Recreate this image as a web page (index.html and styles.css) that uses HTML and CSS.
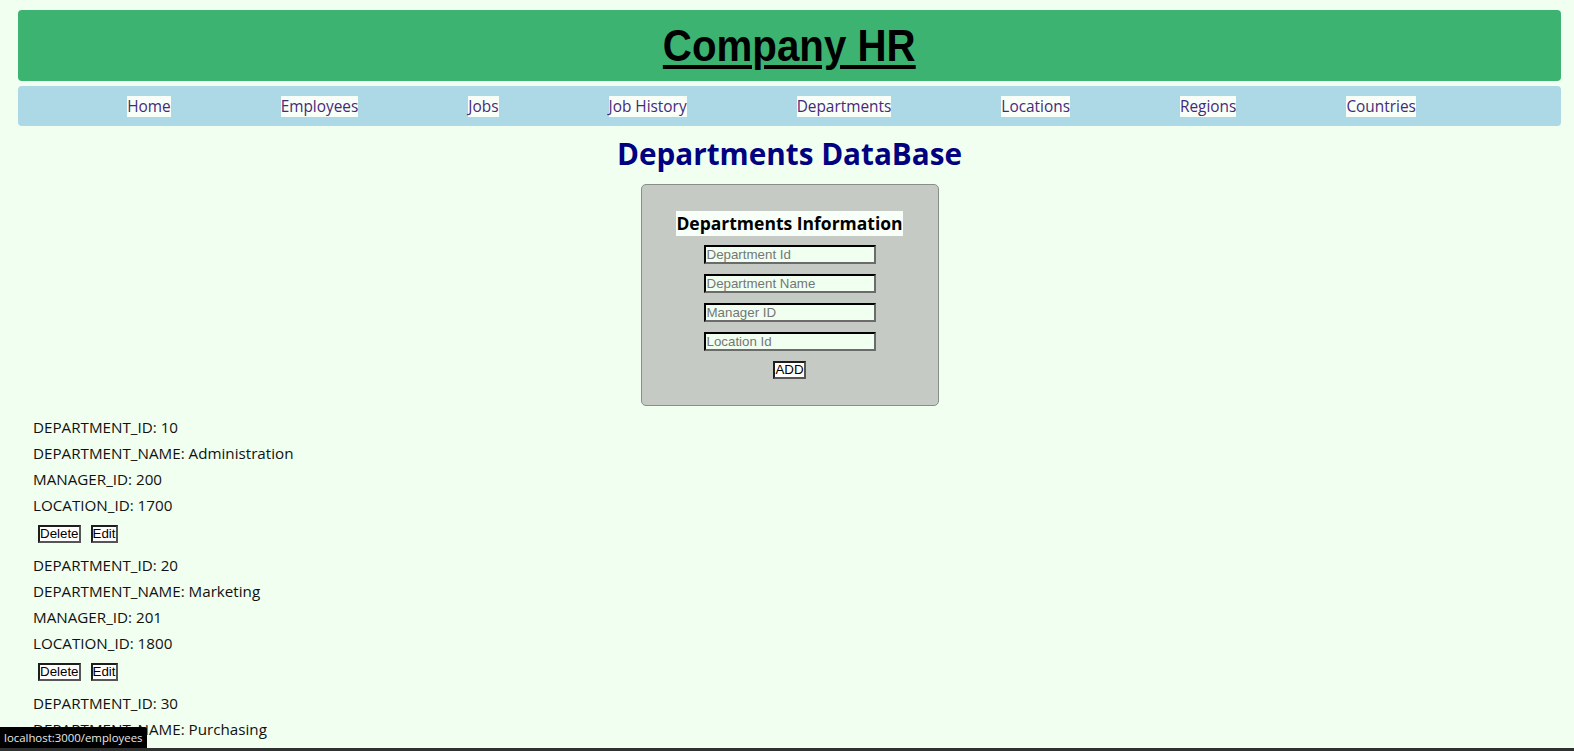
FILE: index.html
```html
<!DOCTYPE html>
<html lang="en">
<head>
<meta charset="utf-8">
<title>Company HR</title>
<link rel="stylesheet" href="styles.css">
</head>
<body>
<header class="banner">
  <h1 class="brand">Company HR</h1>
</header>
<nav class="menu">
  <a class="menu-link" href="#">Home</a>
  <a class="menu-link" href="#">Employees</a>
  <a class="menu-link" href="#">Jobs</a>
  <a class="menu-link" href="#">Job History</a>
  <a class="menu-link" href="#">Departments</a>
  <a class="menu-link" href="#">Locations</a>
  <a class="menu-link" href="#">Regions</a>
  <a class="menu-link" href="#">Countries</a>
</nav>
<h2 class="page-title">Departments DataBase</h2>
<form class="form-card">
  <h3 class="form-title">Departments Information</h3>
  <input class="field" type="text" placeholder="Department Id">
  <input class="field" type="text" placeholder="Department Name">
  <input class="field" type="text" placeholder="Manager ID">
  <input class="field" type="text" placeholder="Location Id">
  <button class="btn" type="button">ADD</button>
</form>
<section class="records">
  <div class="record">
    <div class="line">DEPARTMENT_ID: 10</div>
    <div class="line">DEPARTMENT_NAME: Administration</div>
    <div class="line">MANAGER_ID: 200</div>
    <div class="line">LOCATION_ID: 1700</div>
    <div class="actions"><button class="btn" type="button">Delete</button><button class="btn" type="button">Edit</button></div>
  </div>
  <div class="record">
    <div class="line">DEPARTMENT_ID: 20</div>
    <div class="line">DEPARTMENT_NAME: Marketing</div>
    <div class="line">MANAGER_ID: 201</div>
    <div class="line">LOCATION_ID: 1800</div>
    <div class="actions"><button class="btn" type="button">Delete</button><button class="btn" type="button">Edit</button></div>
  </div>
  <div class="record">
    <div class="line">DEPARTMENT_ID: 30</div>
    <div class="line">DEPARTMENT_NAME: Purchasing</div>
    <div class="line">MANAGER_ID: 114</div>
    <div class="line">LOCATION_ID: 1700</div>
    <div class="actions"><button class="btn" type="button">Delete</button><button class="btn" type="button">Edit</button></div>
  </div>
</section>
<div class="status-tip">localhost:3000/employees</div>
<div class="window-edge"></div>
</body>
</html>
```
FILE: styles.css
```css
html {
  scrollbar-width: none;
}
body {
  margin: 0;
  padding: 10px 13px 0 18px;
  background: #f0fff0;
  font-family: "Open Sans", "Noto Sans", sans-serif;
  color: #111;
}
.banner {
  height: 71px;
  background: #3cb371;
  border-radius: 4px;
  display: flex;
  align-items: center;
  justify-content: center;
}
.brand {
  margin: 0;
  font-family: "Liberation Sans", Arial, sans-serif;
  font-weight: bold;
  font-size: 45px;
  line-height: 1;
  color: #000;
  text-decoration: underline;
  text-decoration-thickness: 4px;
  text-underline-offset: 4px;
  transform: scaleX(0.895);
}
.menu {
  margin-top: 5px;
  height: 40px;
  background: #add8e6;
  border-radius: 4px;
  display: flex;
  align-items: center;
  justify-content: center;
  gap: 110px;
  padding-right: 36px;
}
.menu-link {
  font-size: 15.4px;
  color: #47297a;
  background: #f8fff8;
  text-decoration: none;
}
.page-title {
  margin: 8px 0 10px;
  text-align: center;
  font-size: 29.7px;
  line-height: 40px;
  font-weight: bold;
  color: #000080;
}
.form-card {
  width: 298px;
  box-sizing: border-box;
  margin: 0 auto;
  background: #c5cac5;
  border: 1px solid #8a8e8a;
  border-radius: 5px;
  padding: 26px 0 26px;
  display: flex;
  flex-direction: column;
  align-items: center;
  gap: 10px;
}
.form-title {
  margin: 0 0 -1px;
  font-size: 17.5px;
  line-height: 25px;
  font-weight: bold;
  color: #000;
  background: #f8fff8;
}
.field {
  width: 172px;
  height: 19px;
  box-sizing: border-box;
  margin: 0;
  padding: 0 1px;
  border: 2px inset #666;
  border-color: #1e1e1e #6b6b6b #6b6b6b #1e1e1e;
  background: #f0fff0;
  font-family: "Liberation Sans", Arial, sans-serif;
  font-size: 13.33px;
}
.field::placeholder {
  color: #767676;
}
.btn {
  height: 18px;
  box-sizing: border-box;
  margin: 0;
  padding: 0;
  border: 2px solid #1e1e1e;
  border-color: #1e1e1e #555 #555 #1e1e1e;
  background: #fff;
  font-family: "Liberation Sans", Arial, sans-serif;
  font-size: 13.33px;
  line-height: 14px;
  color: #000;
}
.records {
  margin-top: 8px;
  padding-left: 15px;
}
.record {
  padding-bottom: 9px;
}
.line {
  font-size: 15.2px;
  line-height: 26px;
}
.actions {
  margin-top: 7px;
  padding-left: 5px;
  display: flex;
  gap: 10px;
}
.status-tip {
  position: fixed;
  left: 0;
  bottom: 3px;
  height: 21px;
  padding: 0 4px;
  background: #000;
  color: #e8e8e8;
  font-size: 11.4px;
  line-height: 21px;
  border-top-right-radius: 2px;
}
.window-edge {
  position: fixed;
  left: 0;
  right: 0;
  bottom: 0;
  height: 3px;
  background: #2f3131;
}
```
